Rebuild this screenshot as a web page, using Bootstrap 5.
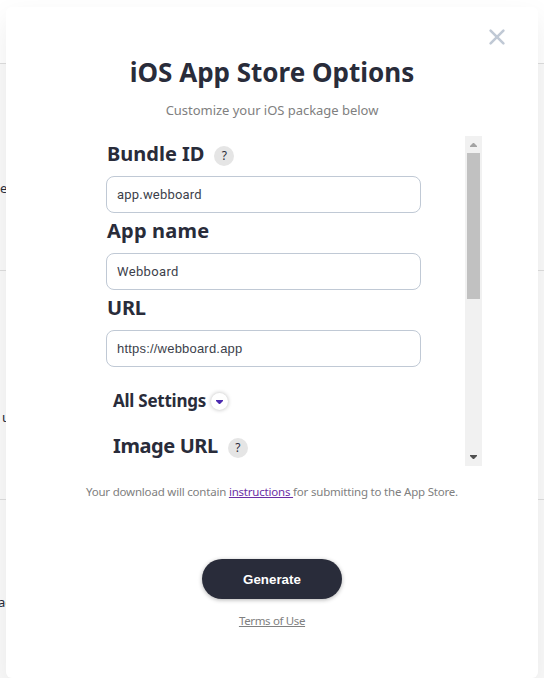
<!DOCTYPE html>
<html lang="en">
<head>
<meta charset="utf-8">
<meta name="viewport" content="width=device-width, initial-scale=1">
<title>iOS App Store Options</title>
<link href="https://cdn.jsdelivr.net/npm/bootstrap@5.3.0/dist/css/bootstrap.min.css" rel="stylesheet">
<style>
body{height:678px;background:#fff;color:#292c3a;font-family:"Noto Sans","Open Sans",sans-serif;position:relative}
.page-row{border-bottom:1px solid #dedede;background:#fafafa;font-size:13px;line-height:20px}
.page-row.top-row{height:64px;background:#fff}
.page-row.r1{height:207px;padding-top:114px}
.page-row.r2{height:229px;padding:136px 0 0 2px}
.page-row.r3{height:178px;padding-top:92px;border:0}
.page-row .clip-a{margin-left:-2px}
.sheet{position:absolute;left:6px;top:7px;width:532px;height:671px;border-radius:6px;background:#fff;box-shadow:0 12px 30px rgba(0,0,0,.075);padding:49px 56px 0}
.close-x{position:absolute;right:32px;top:21px;width:18px;height:18px}
.sheet-title{font-size:26px;line-height:32px;font-weight:700;margin:0 0 12px}
.sheet-sub{font-size:13px;line-height:20px;margin:0 0 16px;color:#808080;letter-spacing:-.03px}
.scroller{height:330px;padding-left:44px}
.fields{width:315px;padding-top:1px}
.field-label{font-size:20px;line-height:34px;font-weight:700;height:40px;gap:10px;padding-left:1px}
.field-label+.field-input{margin-top:-1px;margin-bottom:1px}
.l2{letter-spacing:.2px}
.l3{letter-spacing:-.2px}
.l4{letter-spacing:-.25px}
.l5{letter-spacing:-.4px}
.help{width:20px;height:20px;border-radius:50%;background:#e5e5e5;font-size:12px;line-height:19px;font-weight:400;text-align:center;letter-spacing:0;margin-top:9px}
.field-input.form-control{height:37px;border:1px solid #c0c9d5;border-radius:8px;padding:0 10px;font-size:13px;color:#3c3f4b;font-family:Roboto,sans-serif;letter-spacing:.2px}
.field-input.i2{letter-spacing:.35px!important}
.field-input.arial.form-control{font-family:"Liberation Sans",Arial,sans-serif}
.settings{font-size:17px;line-height:24px;font-weight:700;margin:22px 0 16px 7px;gap:5px}
.toggle{width:17px;height:17px;border-radius:50%;box-shadow:0 0 4px rgba(0,0,0,.28);margin-top:4px}
.image-label{margin-left:6px}
.track{width:17px;background:#f1f1f1}
.thumb{width:13px;height:146px;background:#c1c1c1}
.note{font-size:11.5px;letter-spacing:-.2px;line-height:18px;color:#808080;margin:17px 0 0}
.note a{color:#6b2fa5;text-decoration:underline}
.go.btn{width:140px;height:40px;background:#292c3a;color:#fff;border:0;font:700 13.33px "Liberation Sans",Arial,sans-serif;box-shadow:0 1px 4px rgba(0,0,0,.3)}
.terms{font-size:11.5px;letter-spacing:-.35px;line-height:18px;color:#808080}
.bottom{margin:58px 0 0;gap:13px}
</style>
</head>
<body class="overflow-hidden">
<div class="page-row top-row"></div>
<div class="page-row r1"><span>e</span></div>
<div class="page-row r2">u</div>
<div class="page-row r3"><div class="clip-a">ac</div></div>
<main class="sheet">
  <svg class="close-x" viewBox="0 0 18 18" stroke="#c0c9d5" stroke-width="2.6" stroke-linecap="round"><path d="M2.6 2.6 15.4 15.4M15.4 2.6 2.6 15.4"/></svg>
  <h1 class="sheet-title text-center">iOS App Store Options</h1>
  <p class="sheet-sub text-center">Customize your iOS package below</p>
  <div class="scroller d-flex justify-content-between overflow-hidden">
    <div class="fields">
      <div class="field-label d-flex"><span class="l1">Bundle ID</span><span class="help">?</span></div>
      <input class="form-control field-input i1" value="app.webboard">
      <div class="field-label"><span class="l2">App name</span></div>
      <input class="form-control field-input i2" value="Webboard">
      <div class="field-label"><span class="l3">URL</span></div>
      <input class="form-control field-input arial i3" value="https://webboard.app">
      <div class="settings d-flex"><span class="l4">All Settings</span>
        <span class="toggle d-flex align-items-center justify-content-center"><svg width="7" height="4" viewBox="0 0 7 4"><path d="M0 0H7V1L4 4H3L0 1Z" fill="#4c2bb0"/></svg></span></div>
      <div class="field-label image-label d-flex"><span class="l5">Image URL</span><span class="help">?</span></div>
    </div>
    <div class="track d-flex flex-column align-items-center">
      <svg width="17" height="17"><path d="M5 11H12V10L9 7H8L5 10Z" fill="#a3a3a3"/></svg>
      <div class="thumb"></div>
      <svg class="mt-auto" width="17" height="17"><path d="M5 6H12V7L9 10H8L5 7Z" fill="#505050"/></svg>
    </div>
  </div>
  <p class="note text-center text-nowrap">Your download will contain <a href="#">instructions </a>for submitting to the App Store.</p>
  <div class="bottom d-flex flex-column align-items-center">
    <button class="btn go rounded-pill">Generate</button>
    <a class="terms" href="#">Terms of Use</a>
  </div>
</main>
<script src="https://cdn.jsdelivr.net/npm/bootstrap@5.3.0/dist/js/bootstrap.bundle.min.js"></script>
</body>
</html>
